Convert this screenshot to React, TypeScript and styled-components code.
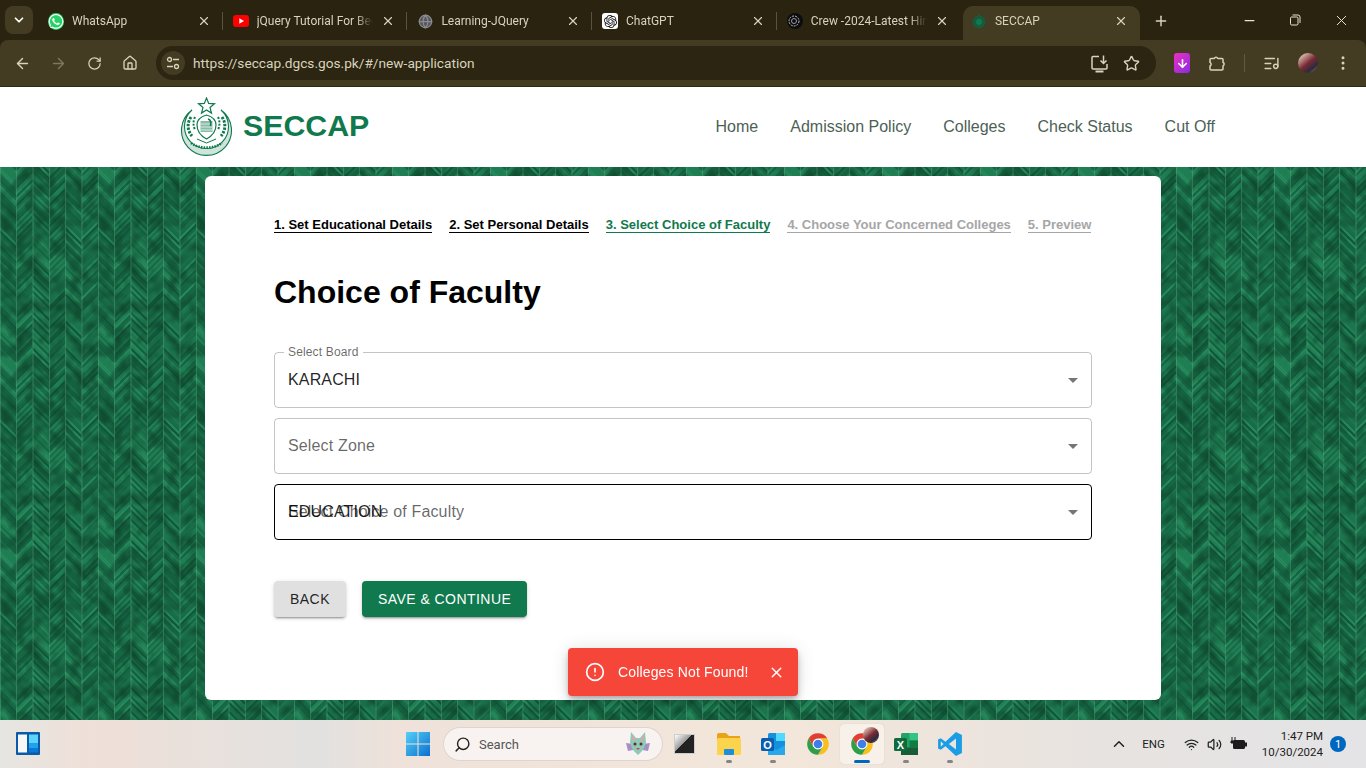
import React from 'react';
import styled, { createGlobalStyle } from 'styled-components';
import {
  ArrowLeft,
  ArrowRight,
  RotateCw,
  House,
  X,
  Plus,
  Minus,
  ChevronDown,
  ChevronUp,
  Star,
  ListMusic,
  EllipsisVertical,
  Search,
  Wifi,
  Volume2,
  Globe,
  CircleAlert,
  ArrowDown,
} from 'lucide-react';
import { FaWhatsapp } from 'react-icons/fa';
import { SiOpenai } from 'react-icons/si';

// woven green wallpaper: planks 16.3px wide with slanted strokes and dark mottling
const buildPattern = () => {
  const palette = ['#14603e', '#166543', '#196d48', '#1c754d', '#207f54', '#25895b', '#115639', '#186a46'];
  let seed = 11;
  const next = () => {
    seed = (seed * 137 + 59) % 1009;
    return seed;
  };
  const w = 16.33;
  const pitch = 3;
  const tileH = 192;
  let shapes = '';
  for (let c = 0; c < 6; c++) {
    const x = c * w;
    const dir = c % 2 === 0 ? 1 : -1;
    const a = dir > 0 ? x : x + w;
    const b = dir > 0 ? x + w : x;
    const count = tileH / pitch;
    for (let i = 0; i < count; i++) {
      const colour = palette[next() % palette.length];
      // the same stripe is drawn again one tile up so that the tile joins cleanly
      [0, -tileH].forEach((shift) => {
        const y = i * pitch + shift;
        shapes += `<polygon points='${a},${y} ${b},${y + w} ${b},${y + w + pitch} ${a},${y + pitch}' fill='${colour}'/>`;
      });
    }
  }
  const noise = `<filter id='n' x='0' y='0' width='100%' height='100%' color-interpolation-filters='sRGB'><feTurbulence type='fractalNoise' baseFrequency='0.07' numOctaves='2' seed='4' stitchTiles='stitch'/><feColorMatrix values='0 0 0 0 0.05 0 0 0 0 0.27 0 0 0 0 0.17 0 0 0 2 -0.8'/></filter>`;
  let seams = '';
  for (let c = 0; c < 6; c++) {
    seams += `<rect x='${c * w}' y='0' width='0.7' height='${tileH}' fill='#7cc4a0' opacity='.4'/>`;
  }
  const svg = `<svg xmlns='http://www.w3.org/2000/svg' width='98' height='${tileH}'><defs>${noise}</defs><rect width='98' height='${tileH}' fill='#177048'/>${shapes}<rect width='98' height='${tileH}' filter='url(#n)'/>${seams}</svg>`;
  return `url("data:image/svg+xml,${encodeURIComponent(svg)}")`;
};

const GlobalStyle = createGlobalStyle`
  html, body {
    margin: 0;
    padding: 0;
    overflow: hidden;
    font-family: "Liberation Sans", Arial, sans-serif;
  }
  * { box-sizing: border-box; }
`;

const Screen = styled.div`
  width: 1366px;
  height: 768px;
  display: flex;
  flex-direction: column;
  overflow: hidden;
  background: #29230f;
`;

/* browser chrome */
const TabStrip = styled.div`
  height: 40px;
  flex: none;
  display: flex;
  align-items: flex-end;
  padding-left: 5px;
  color: #d8d3bd;
  font-family: Roboto, "Noto Sans", sans-serif;
  font-size: 12px;
`;

const TabMenu = styled.div`
  width: 28px;
  height: 28px;
  margin: 0 5px 6px 0;
  border-radius: 8px;
  background: #433b22;
  display: flex;
  align-items: center;
  justify-content: center;
`;

const Tab = styled.div<{ $active?: boolean; $last?: boolean }>`
  width: ${(p) => (p.$active ? '177px' : '184.7px')};
  height: 34px;
  margin-left: ${(p) => (p.$active ? '1.5px' : '0')};
  padding: 0 12px 4px ${(p) => (p.$active ? '8px' : '10px')};
  display: flex;
  align-items: center;
  gap: 8px;
  position: relative;
  background: ${(p) => (p.$active ? '#433b22' : 'transparent')};
  border-radius: 10px 10px 0 0;
  &::after {
    content: '';
    display: ${(p) => (p.$active || p.$last ? 'none' : 'block')};
    position: absolute;
    right: 0;
    top: 6px;
    height: 18px;
    width: 1px;
    background: #5c5439;
  }
`;

const TabTitle = styled.span`
  flex: 1;
  white-space: nowrap;
  overflow: hidden;
  -webkit-mask-image: linear-gradient(to right, #000 85%, transparent);
  mask-image: linear-gradient(to right, #000 85%, transparent);
`;

const TabIcon = styled.span<{ $bg?: string }>`
  width: 16px;
  height: 16px;
  flex: none;
  display: flex;
  align-items: center;
  justify-content: center;
  border-radius: 3px;
  background: ${(p) => p.$bg || 'transparent'};
`;

const NewTab = styled.div`
  width: 28px;
  height: 34px;
  margin-left: 13px;
  display: flex;
  align-items: center;
  padding-bottom: 4px;
`;

const WindowButtons = styled.div`
  margin-left: auto;
  height: 40px;
  width: 140px;
  display: flex;
  align-items: center;
  justify-content: space-around;
`;

const Toolbar = styled.div`
  height: 47px;
  flex: none;
  background: #433b22;
  border-radius: 8px 8px 0 0;
  border-bottom: 1px solid #2f2a14;
  display: flex;
  align-items: center;
  padding-left: 13px;
  color: #d8d3bd;
`;

const NavIcons = styled.div`
  display: flex;
  align-items: center;
  gap: 18px;
`;

const NavSlot = styled.span`
  width: 18px;
  height: 18px;
  display: flex;
  align-items: center;
  justify-content: center;
`;

const Omnibox = styled.div`
  width: 1000px;
  height: 34px;
  margin-left: 17px;
  border-radius: 17px;
  background: #2c2511;
  display: flex;
  align-items: center;
  padding: 0 16px 0 5px;
  font-family: Roboto, "Noto Sans", sans-serif;
  font-size: 13.7px;
  color: #d8d3bd;
`;

const SiteInfo = styled.div`
  width: 24px;
  height: 24px;
  margin-right: 8px;
  border-radius: 50%;
  background: #433b22;
  display: flex;
  align-items: center;
  justify-content: center;
`;

const Url = styled.span`
  flex: 1;
`;

const OmniActions = styled.div`
  display: flex;
  align-items: center;
  gap: 14px;
`;

const ExtensionArea = styled.div`
  display: flex;
  align-items: center;
  margin-left: 18px;
  gap: 18px;
`;

const DownloadBadge = styled.div`
  width: 16px;
  height: 20px;
  border-radius: 3px;
  background: linear-gradient(135deg, #f02fc2, #8a2be2);
  display: flex;
  align-items: center;
  justify-content: center;
`;

const Divider = styled.div`
  width: 1px;
  height: 18px;
  background: #625a3e;
`;

const Avatar = styled.div`
  width: 20px;
  height: 20px;
  border-radius: 50%;
  background: linear-gradient(140deg, #c9a59a 20%, #7a2a35 50%, #2a2a3c 75%, #b88a80);
`;

/* site header */
const SiteHeader = styled.header`
  height: 80px;
  flex: none;
  background: #fff;
  display: flex;
  align-items: center;
  padding: 0 151px 0 180px;
`;

const Brand = styled.div`
  display: flex;
  align-items: center;
  gap: 10px;
`;

const BrandName = styled.span`
  margin-top: -2px;
  color: #10794d;
  font-size: 30.3px;
  font-weight: 700;
`;

const SiteNav = styled.nav`
  margin-left: auto;
  display: flex;
  gap: 32px;
  font-size: 16px;
  color: #4d5f56;
`;

/* page body */
const Wallpaper = styled.main`
  flex: 1;
  min-height: 0;
  padding: 9px 205px 20px;
  background-color: #177048;
  background-image: ${buildPattern()};
`;

const Card = styled.section`
  height: 100%;
  background: #fff;
  border-radius: 6px;
  padding: 40px 69px 0;
`;

const Steps = styled.div`
  display: flex;
  gap: 17px;
  font-size: 13px;
  font-weight: 700;
  line-height: 17px;
  white-space: nowrap;
`;

const stepColors = { done: '#000', current: '#10794d', todo: '#a6a6a6' };

const Step = styled.span<{ $state: 'done' | 'current' | 'todo' }>`
  color: ${(p) => stepColors[p.$state]};
  border-bottom: 1px solid ${(p) => stepColors[p.$state]};
  height: 17px;
`;

const Title = styled.h1`
  margin: 41px 0 41px;
  font-size: 32px;
  line-height: 37px;
  font-weight: 700;
  color: #000;
`;

const Fields = styled.div`
  display: flex;
  flex-direction: column;
  gap: 10px;
`;

const Field = styled.div<{ $focused?: boolean }>`
  position: relative;
  height: 56px;
  padding: 0 13px;
  display: flex;
  align-items: center;
  border-radius: 4px;
  border: 1px solid ${(p) => (p.$focused ? '#000' : 'rgba(0, 0, 0, 0.23)')};
  font-size: 16px;
  letter-spacing: 0.15px;
  color: rgba(0, 0, 0, 0.87);
`;

const FloatingLabel = styled.label`
  position: absolute;
  left: 9px;
  top: -8px;
  padding: 0 4px;
  background: #fff;
  font-size: 12px;
  line-height: 14px;
  color: rgba(0, 0, 0, 0.6);
`;

const Placeholder = styled.span`
  position: absolute;
  left: 13px;
  color: rgba(0, 0, 0, 0.6);
`;

const Arrow = styled.svg`
  position: absolute;
  right: 6px;
  top: 15px;
  width: 24px;
  height: 24px;
  fill: rgba(0, 0, 0, 0.54);
`;

const Actions = styled.div`
  display: flex;
  gap: 16px;
  margin-top: 41px;
`;

const ActionButton = styled.button<{ $primary?: boolean }>`
  height: 36px;
  padding: 0 16px;
  border: 0;
  border-radius: 4px;
  background: ${(p) => (p.$primary ? '#10794d' : '#e0e0e0')};
  color: ${(p) => (p.$primary ? '#fff' : 'rgba(0, 0, 0, 0.87)')};
  font-family: "Liberation Sans", Arial, sans-serif;
  font-size: 14px;
  letter-spacing: 0.45px;
  text-transform: uppercase;
  box-shadow: 0 3px 1px -2px rgba(0, 0, 0, 0.2), 0 2px 2px rgba(0, 0, 0, 0.14), 0 1px 5px rgba(0, 0, 0, 0.12);
`;

const Toast = styled.div`
  position: fixed;
  left: 568px;
  top: 648px;
  width: 230px;
  height: 48px;
  padding: 0 13px 0 17px;
  display: flex;
  align-items: center;
  gap: 13px;
  border-radius: 4px;
  background: #f64539;
  color: #fff;
  font-size: 14px;
  letter-spacing: 0.15px;
  box-shadow: 0 3px 5px -1px rgba(0, 0, 0, 0.2), 0 6px 10px rgba(0, 0, 0, 0.14), 0 1px 18px rgba(0, 0, 0, 0.12);
`;

const ToastText = styled.span`
  flex: 1;
  white-space: nowrap;
`;

/* windows taskbar */
const Taskbar = styled.footer`
  height: 48px;
  flex: none;
  display: flex;
  align-items: center;
  padding-left: 16px;
  color: #222;
  font-family: Roboto, "Noto Sans", sans-serif;
  background: linear-gradient(90deg, #e6e5e1 0, #efe0d8 90px, #e2e1e0 320px, #efe2da 400px, #f3e6da 800px, #e7e3e0 1100px, #e4e4e6 1366px);
`;

const Widgets = styled.div`
  width: 390px;
  display: flex;
`;

const SearchPill = styled.div`
  width: 218px;
  height: 32px;
  margin-left: 14px;
  padding: 0 10px;
  border-radius: 16px;
  background: #f8f3f0;
  box-shadow: 0 0 0 1px #dfd5cf;
  display: flex;
  align-items: center;
  gap: 8px;
  font-size: 13px;
  color: #555;
  span { flex: 1; }
`;

const AppDock = styled.div`
  display: flex;
  margin-left: 1px;
`;

const DockSlot = styled.div<{ $active?: boolean; $open?: boolean }>`
  width: 44.2px;
  height: 40px;
  position: relative;
  display: flex;
  align-items: center;
  justify-content: center;
  border-radius: 4px;
  background: ${(p) => (p.$active ? '#f8f1ea' : 'transparent')};
  box-shadow: ${(p) => (p.$active ? '0 0 1px #bbb' : 'none')};
  &::after {
    content: '';
    display: ${(p) => (p.$open || p.$active ? 'block' : 'none')};
    position: absolute;
    bottom: 1px;
    left: 50%;
    transform: translateX(-50%);
    width: ${(p) => (p.$active ? '16px' : '6px')};
    height: 3px;
    border-radius: 2px;
    background: ${(p) => (p.$active ? '#0067c0' : '#858585')};
  }
`;

const TaskView = styled.div`
  width: 21px;
  height: 20px;
  margin-right: 2px;
  background: linear-gradient(135deg, #fff, #999 45%, #222 46%, #222);
  border: 1px solid #ccc;
`;

const Overlap = styled.div`
  position: absolute;
  top: 3px;
  right: 5px;
  width: 16px;
  height: 16px;
  border-radius: 50%;
  background: linear-gradient(140deg, #c9a59a 20%, #7a2a35 50%, #2a2a3c 75%, #b88a80);
`;

const Tray = styled.div`
  margin-left: auto;
  display: flex;
  align-items: center;
  padding-right: 20px;
  font-size: 11.5px;
  color: #1c1c1c;
`;

const TrayLang = styled.span`
  margin: 0 19px 0 14px;
`;

const TrayIcons = styled.div`
  display: flex;
  align-items: center;
  gap: 8px;
  margin-right: 14px;
`;

const Clock = styled.div`
  text-align: right;
  line-height: 16px;
  margin-right: 7px;
`;

const Badge = styled.div`
  width: 16px;
  height: 16px;
  border-radius: 50%;
  background: #0067c0;
  color: #fff;
  font-size: 11px;
  display: flex;
  align-items: center;
  justify-content: center;
`;

const ChromeLogo = ({ size = 26 }: { size?: number }) => (
  <svg width={size} height={size} viewBox="0 0 24 24">
    <circle cx="12" cy="12" r="5.2" fill="#fff" />
    <circle cx="12" cy="12" r="4" fill="#3f7ee8" />
    <path d="M12 7H20.66A10 10 0 0 0 3.34 7L7.67 14.5A5 5 0 0 1 12 7Z" fill="#e0402f" />
    <path d="M16.33 14.5L12 22A10 10 0 0 0 20.66 7H12A5 5 0 0 1 16.33 14.5Z" fill="#f7c01d" />
    <path d="M7.67 14.5L3.34 7A10 10 0 0 0 12 22L16.33 14.5A5 5 0 0 1 7.67 14.5Z" fill="#2f9e48" />
  </svg>
);

const WindowsLogo = () => (
  <svg width="24" height="24" viewBox="0 0 24 24">
    <defs>
      <linearGradient id="win" x1="0" y1="0" x2="1" y2="1">
        <stop offset="0" stopColor="#55d0f5" />
        <stop offset="1" stopColor="#0a6fd0" />
      </linearGradient>
    </defs>
    <path d="M0 0h11.5v11.5H0zM12.5 0H24v11.5H12.5zM0 12.5h11.5V24H0zM12.5 12.5H24V24H12.5z" fill="url(#win)" />
  </svg>
);

const WidgetsIcon = () => (
  <svg width="24" height="24" viewBox="0 0 24 24">
    <rect width="24" height="23" rx="1" fill="#0b5aa8" />
    <rect x="2" y="2.5" width="9" height="18" fill="#f7f7f7" />
    <rect x="13" y="2.5" width="9" height="9" fill="#5bd3fb" />
    <rect x="13" y="11.5" width="9" height="4.5" fill="#1fa2ee" />
    <rect x="13" y="16" width="9" height="4.5" fill="#0a78d6" />
  </svg>
);

const BatIcon = () => (
  <svg width="28" height="26" viewBox="0 0 28 26">
    <path d="M2 12l7 1v6l-5 1zM26 12l-7 1v6l5 1z" fill="#a68fc4" />
    <path d="M7 1l5 6h4l5-6 1 11-3 7-5 5-5-5-3-7z" fill="#8fc9b8" />
    <path d="M8.5 4l3 4-2.5 3zM19.5 4l-3 4 2.5 3z" fill="#e9a0ac" />
    <circle cx="11" cy="13" r="1.5" fill="#6b2c1e" />
    <circle cx="17" cy="13" r="1.5" fill="#6b2c1e" />
    <path d="M12 17h4l-2 2z" fill="#c64a4a" />
  </svg>
);

const FolderIcon = () => (
  <svg width="26" height="24" viewBox="0 0 26 24">
    <path d="M1 3a2 2 0 0 1 2-2h7l3 3h11v6H1z" fill="#e8a317" />
    <rect x="1" y="6" width="24" height="17" rx="1.5" fill="#fbd34d" />
    <rect x="8" y="17" width="10" height="6" rx="1" fill="#1b8fd8" />
  </svg>
);

const OutlookIcon = () => (
  <svg width="26" height="26" viewBox="0 0 26 26">
    <rect x="8" y="2" width="17" height="22" rx="1.5" fill="#1490df" />
    <path d="M8 14l8.5 5L25 14v10H8z" fill="#28a8ea" />
    <rect x="16" y="2" width="9" height="8" fill="#50d9ff" />
    <rect x="1" y="7" width="13" height="13" rx="1.5" fill="#0a5eb0" />
    <text x="7.5" y="17.5" textAnchor="middle" fontSize="11" fontWeight="700" fontFamily="Liberation Sans" fill="#fff">O</text>
  </svg>
);

const ExcelIcon = () => (
  <svg width="26" height="26" viewBox="0 0 26 26">
    <rect x="8" y="2" width="17" height="22" rx="1.5" fill="#21a366" />
    <rect x="16.5" y="2" width="8.5" height="7.5" fill="#33c481" />
    <rect x="16.5" y="9.5" width="8.5" height="7" fill="#107c41" />
    <rect x="8" y="16.5" width="17" height="7.5" fill="#185c37" />
    <rect x="1" y="7" width="13" height="13" rx="1.5" fill="#0f6b3a" />
    <text x="7.5" y="17.5" textAnchor="middle" fontSize="11" fontWeight="700" fontFamily="Liberation Sans" fill="#fff">X</text>
  </svg>
);

const VsCodeIcon = () => (
  <svg width="26" height="26" viewBox="0 0 24 24">
    <path fillRule="evenodd" d="M17.5 1L23 3.6V20.4L17.5 23 7.8 14 3.4 17.4 1 16.2V7.8L3.4 6.6 7.8 10zM17.5 7L11 12l6.5 5zM3.5 9.5v5L6 12z" fill="#1a9de6" />
  </svg>
);

const BatteryIcon = () => (
  <svg width="18" height="16" viewBox="0 0 18 16">
    <rect x="3" y="4" width="12" height="9" rx="1.5" fill="#1c1c1c" />
    <rect x="15" y="6.5" width="2" height="4" fill="#1c1c1c" />
    <path d="M2 1v4M5 1v4M1 5h5v2H1z" stroke="#1c1c1c" strokeWidth="1" fill="#1c1c1c" />
  </svg>
);

const SlidersIcon = () => (
  <svg width="14" height="14" viewBox="0 0 14 14" fill="none" stroke="#d8d3bd" strokeWidth="1.3">
    <circle cx="3.5" cy="3.5" r="2" />
    <path d="M7 3.5h6M1 10.5h6" />
    <circle cx="10.5" cy="10.5" r="2" />
  </svg>
);

const InstallIcon = () => (
  <svg width="19" height="19" viewBox="0 0 19 19" fill="none" stroke="#d8d3bd" strokeWidth="1.5">
    <path d="M9 2.5H3a1 1 0 0 0-1 1V14a1 1 0 0 0 1 1h13a1 1 0 0 0 1-1v-4" />
    <path d="M13.5 1.5v7.5M10.5 6.5l3 3 3-3" />
    <path d="M5.5 17.5h8" strokeWidth="2" />
  </svg>
);

const ExtensionIcon = () => (
  <svg width="18" height="18" viewBox="0 0 18 18" fill="none" stroke="#d8d3bd" strokeWidth="1.5" strokeLinejoin="round">
    <path d="M3 4.5h3.2a2 2 0 0 1 3.6 0H14a1 1 0 0 1 1 1v2.7a2 2 0 0 1 0 3.6V15a1 1 0 0 1-1 1H3a1 1 0 0 1-1-1v-3a2 2 0 0 0 0-3.6V5.5a1 1 0 0 1 1-1z" />
  </svg>
);

const SeccapFavicon = () => (
  <svg width="16" height="16" viewBox="0 0 16 16">
    <circle cx="8" cy="9" r="6.5" fill="#185a3c" />
    <circle cx="8" cy="9" r="3" fill="#0f7a4d" />
    <path d="M8 0l1.2 2.6L8 4 6.8 2.6z" fill="#185a3c" />
  </svg>
);

const CrewFavicon = () => (
  <svg width="16" height="16" viewBox="0 0 16 16" fill="none">
    <circle cx="8" cy="8" r="8" fill="#0d0d10" />
    <circle cx="7" cy="8" r="5" stroke="#bbb" strokeWidth="1" strokeDasharray="2 1" />
    <circle cx="7" cy="8" r="2.5" stroke="#999" strokeWidth="1" />
  </svg>
);

const YoutubeFavicon = () => (
  <svg width="16" height="12" viewBox="0 0 16 12">
    <rect width="16" height="12" rx="3" fill="#f00" />
    <path d="M6.3 3.2L11 6l-4.7 2.8z" fill="#fff" />
  </svg>
);

const Emblem = () => (
  <svg width="53" height="60" viewBox="0 0 53 60" fill="none" stroke="#10794d">
    <path d="M26.5 1l2.2 5.4 5.8.4-4.5 3.7 1.5 5.6-5-3.1-5 3.1 1.5-5.6-4.5-3.7 5.8-.4z" strokeWidth="1.2" />
    <path d="M12 13A25 25 0 1 0 41 13A22 22 0 1 1 12 13Z" fill="#10794d" fillOpacity="0.2" strokeWidth="1.1" />
    <path d="M26.5 18c7 2 9.5 5 9.5 10 0 7-4 11-9.5 14-5.5-3-9.5-7-9.5-14 0-5 2.5-8 9.5-10z" strokeWidth="1.2" />
    <rect x="20.5" y="24" width="12" height="11" fill="#10794d" fillOpacity="0.5" stroke="none" />
    <path d="M20.5 27h12M20.5 30h12M20.5 33h12" stroke="#fff" strokeWidth="0.7" />
    <path d="M28 22c3 1 3.5 3 2.5 7" strokeWidth="1.6" />
    <path d="M11 20c-4 6-4 13 1 19M42 20c4 6 4 13-1 19" strokeWidth="3" strokeDasharray="2.4 1.3" />
    <path d="M15 20c-2 4-2 8 0 13M38 20c2 4 2 8 0 13" strokeWidth="2" strokeDasharray="2 1.5" />
    <path d="M11 46c8 6 23 6 31 0" strokeWidth="2.4" strokeDasharray="1.5 1.2" />
    <path d="M17 42l9.5 4 9.5-4" strokeWidth="1" />
  </svg>
);

const chromeIcon = '#d8d3bd';

const App: React.FC = () => {
  return (
    <Screen>
      <GlobalStyle />
      <TabStrip>
        <TabMenu>
          <ChevronDown size={14} color="#fff" strokeWidth={3} />
        </TabMenu>
        <Tab>
          <TabIcon>
            <FaWhatsapp size={17} color="#fff" style={{ background: '#25d366', borderRadius: '50%' }} />
          </TabIcon>
          <TabTitle>WhatsApp</TabTitle>
          <X size={14} color={chromeIcon} />
        </Tab>
        <Tab>
          <TabIcon>
            <YoutubeFavicon />
          </TabIcon>
          <TabTitle>jQuery Tutorial For Beginners</TabTitle>
          <X size={14} color={chromeIcon} />
        </Tab>
        <Tab>
          <TabIcon>
            <Globe size={15} color="#8a8a90" fill="#55555c" />
          </TabIcon>
          <TabTitle>Learning-JQuery</TabTitle>
          <X size={14} color={chromeIcon} />
        </Tab>
        <Tab>
          <TabIcon $bg="#fff">
            <SiOpenai size={13} color="#111" />
          </TabIcon>
          <TabTitle>ChatGPT</TabTitle>
          <X size={14} color={chromeIcon} />
        </Tab>
        <Tab $last>
          <TabIcon>
            <CrewFavicon />
          </TabIcon>
          <TabTitle>Crew -2024-Latest Hindi</TabTitle>
          <X size={14} color={chromeIcon} />
        </Tab>
        <Tab $active>
          <TabIcon>
            <SeccapFavicon />
          </TabIcon>
          <TabTitle>SECCAP</TabTitle>
          <X size={14} color={chromeIcon} />
        </Tab>
        <NewTab>
          <Plus size={16} color={chromeIcon} strokeWidth={2.2} />
        </NewTab>
        <WindowButtons>
          <Minus size={15} color="#e8e4d2" />
          <svg width="12" height="12" viewBox="0 0 12 12" fill="none" stroke="#e8e4d2">
            <rect x="1.5" y="3" width="7.5" height="8" rx="1.2" />
            <path d="M3.5 1h5.5a2 2 0 0 1 2 2v6" />
          </svg>
          <X size={17} color="#e8e4d2" strokeWidth={1.4} />
        </WindowButtons>
      </TabStrip>

      <Toolbar>
        <NavIcons>
          <NavSlot>
            <ArrowLeft size={17} color={chromeIcon} />
          </NavSlot>
          <NavSlot>
            <ArrowRight size={17} color="#7d7660" />
          </NavSlot>
          <NavSlot>
            <RotateCw size={15} color={chromeIcon} />
          </NavSlot>
          <NavSlot>
            <House size={16} color={chromeIcon} />
          </NavSlot>
        </NavIcons>
        <Omnibox>
          <SiteInfo>
            <SlidersIcon />
          </SiteInfo>
          <Url>https://seccap.dgcs.gos.pk/#/new-application</Url>
          <OmniActions>
            <InstallIcon />
            <Star size={17} color={chromeIcon} />
          </OmniActions>
        </Omnibox>
        <ExtensionArea>
          <DownloadBadge>
            <ArrowDown size={13} color="#fff" strokeWidth={3} />
          </DownloadBadge>
          <ExtensionIcon />
          <Divider />
          <ListMusic size={17} color={chromeIcon} />
          <Avatar />
          <EllipsisVertical size={18} color={chromeIcon} style={{ marginLeft: -2 }} />
        </ExtensionArea>
      </Toolbar>

      <SiteHeader>
        <Brand>
          <Emblem />
          <BrandName>SECCAP</BrandName>
        </Brand>
        <SiteNav>
          <span>Home</span>
          <span>Admission Policy</span>
          <span>Colleges</span>
          <span>Check Status</span>
          <span>Cut Off</span>
        </SiteNav>
      </SiteHeader>

      <Wallpaper>
        <Card>
          <Steps>
            <Step $state="done">1. Set Educational Details</Step>
            <Step $state="done">2. Set Personal Details</Step>
            <Step $state="current">3. Select Choice of Faculty</Step>
            <Step $state="todo">4. Choose Your Concerned Colleges</Step>
            <Step $state="todo">5. Preview</Step>
          </Steps>
          <Title>Choice of Faculty</Title>
          <Fields>
            <Field>
              <FloatingLabel>Select Board</FloatingLabel>
              KARACHI
              <Arrow viewBox="0 0 24 24">
                <path d="M7 10l5 5 5-5z" />
              </Arrow>
            </Field>
            <Field>
              <Placeholder>Select Zone</Placeholder>
              <Arrow viewBox="0 0 24 24">
                <path d="M7 10l5 5 5-5z" />
              </Arrow>
            </Field>
            <Field $focused>
              <Placeholder>Select Choice of Faculty</Placeholder>
              EDUCATION
              <Arrow viewBox="0 0 24 24">
                <path d="M7 10l5 5 5-5z" />
              </Arrow>
            </Field>
          </Fields>
          <Actions>
            <ActionButton>Back</ActionButton>
            <ActionButton $primary>Save &amp; Continue</ActionButton>
          </Actions>
        </Card>
      </Wallpaper>

      <Toast>
        <CircleAlert size={20} color="#fff" />
        <ToastText>Colleges Not Found!</ToastText>
        <X size={17} color="#fff" />
      </Toast>

      <Taskbar>
        <Widgets>
          <WidgetsIcon />
        </Widgets>
        <WindowsLogo />
        <SearchPill>
          <Search size={17} color="#222" style={{ transform: 'scaleX(-1)' }} />
          <span>Search</span>
          <BatIcon />
        </SearchPill>
        <AppDock>
          <DockSlot>
            <TaskView />
          </DockSlot>
          <DockSlot $open>
            <FolderIcon />
          </DockSlot>
          <DockSlot $open>
            <OutlookIcon />
          </DockSlot>
          <DockSlot>
            <ChromeLogo />
          </DockSlot>
          <DockSlot $active>
            <ChromeLogo />
            <Overlap />
          </DockSlot>
          <DockSlot $open>
            <ExcelIcon />
          </DockSlot>
          <DockSlot $open>
            <VsCodeIcon />
          </DockSlot>
        </AppDock>
        <Tray>
          <ChevronUp size={18} color="#222" />
          <TrayLang>ENG</TrayLang>
          <TrayIcons>
            <Wifi size={15} color="#222" />
            <Volume2 size={15} color="#222" />
            <BatteryIcon />
          </TrayIcons>
          <Clock>
            <div>1:47 PM</div>
            <div>10/30/2024</div>
          </Clock>
          <Badge>1</Badge>
        </Tray>
      </Taskbar>
    </Screen>
  );
};

export default App;
